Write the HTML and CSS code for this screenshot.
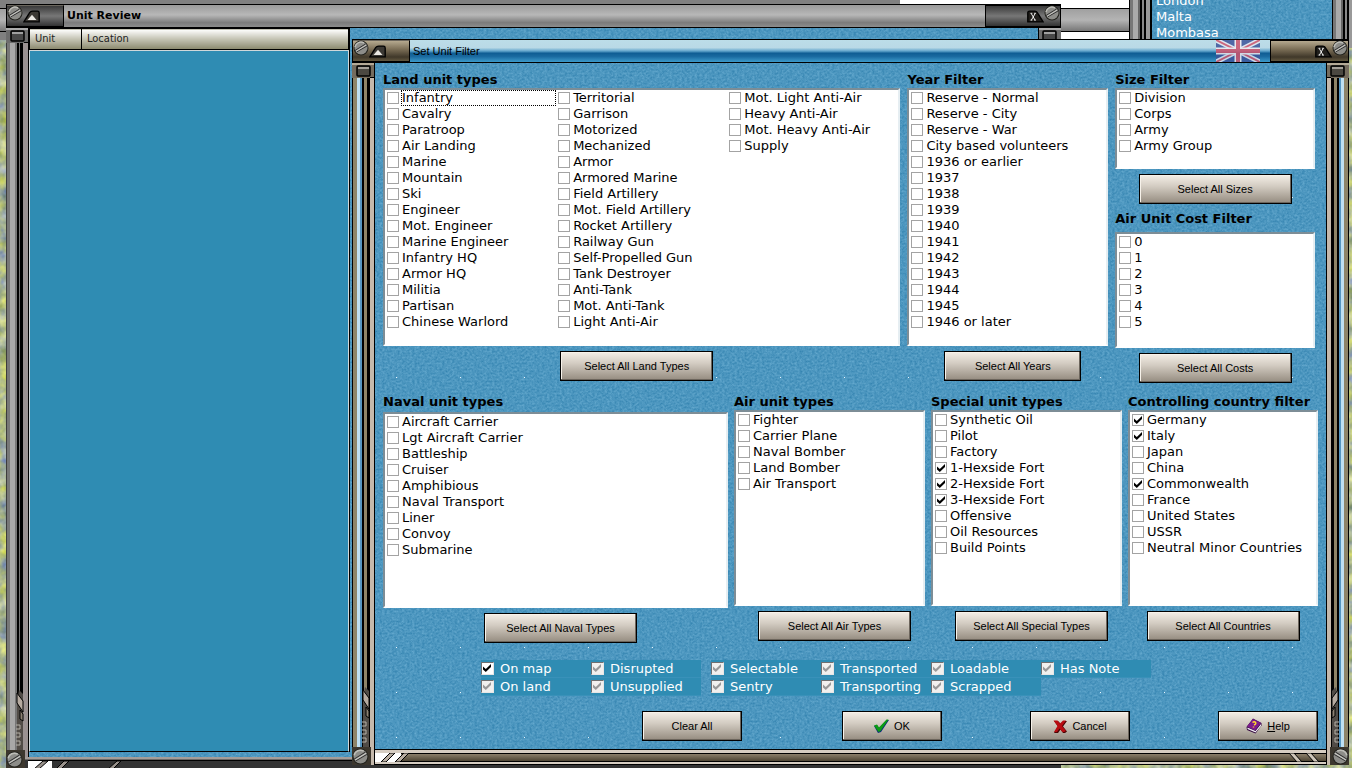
FILE: index.html
```html
<!DOCTYPE html>
<html lang="en">
<head>
  <meta charset="utf-8">
  <title>Set Unit Filter</title>
  <link rel="stylesheet" href="styles.css">
</head>
<body>

<svg class="defs" aria-hidden="true">
  <filter id="grain" x="0" y="0" width="100%" height="100%" color-interpolation-filters="sRGB">
    <feTurbulence type="fractalNoise" baseFrequency="0.4 0.5" numOctaves="2" seed="4"/>
    <feColorMatrix values="0.26 0 0 0 0.17  0.2 0 0 0 0.49  0.16 0 0 0 0.67  0 0 0 0 1"/>
  </filter>
  <filter id="terrain" x="0" y="0" width="100%" height="100%" color-interpolation-filters="sRGB">
    <feTurbulence type="fractalNoise" baseFrequency="0.08" numOctaves="3" seed="9"/>
    <feColorMatrix values="0.7 0 0 0 0.32  0.6 0 0 0 0.42  0 0 0.6 0 0.25  0 0 0 0 1"/>
  </filter>
  <pattern id="specks" width="64" height="45" patternUnits="userSpaceOnUse">
    <rect x="21" y="44" width="1" height="1" fill="#e8f6ff"/>
  </pattern>
  <symbol id="screw" viewBox="0 0 16 16">
    <circle cx="8" cy="8" r="7.5" fill="#24241f"/>
    <circle cx="8" cy="8" r="6.5" fill="#8d8d89"/>
    <path d="M2 7a6 6 0 0 1 9-4" fill="none" stroke="#bebeb8" stroke-width="1.5"/>
    <path d="M2 10.500L12.500 4M3.500 12L14 6" stroke="#333" stroke-width="1"/>
    <path d="M3 11.300L13.200 5" stroke="#c9c9c4" stroke-width="1"/>
  </symbol>
  <symbol id="roll" viewBox="0 0 20 14">
    <path d="M1 13L6.500 4Q8 1 11 1h5q2 0 2 2v10z" fill="#3b3833" stroke="#000" stroke-width="1.500"/>
    <path d="M5 11l5-6 5 6z" fill="#e9e7e2"/>
  </symbol>
  <symbol id="close" viewBox="0 0 20 14">
    <path d="M2 2.500Q2 1 4 1h6q2 0 3.500 3L19 13H2z" fill="#211f1c" stroke="#000" stroke-width="1.500"/>
    <path d="M5 3.500h2M9 3.500h2M5 11h2M9 11h2M6 4l4 7M10 4l-4 7" stroke="#fff" fill="none"/>
  </symbol>
  <symbol id="railcap" viewBox="0 0 23 15">
    <path d="M0 0h23v15H0z" fill="#756c5e"/>
    <path d="M0 1h23" stroke="#b5aa96" stroke-width="2"/>
    <rect x="5" y="3" width="13" height="10" rx="1" fill="#4b4841" stroke="#000" stroke-width="1.500"/>
    <path d="M6 5h11" stroke="#a5a098" stroke-width="2"/>
    <path d="M22.500 0v15M18 14.500h5" stroke="#000"/>
  </symbol>
  <symbol id="railfoot" viewBox="0 0 23 92">
    <path d="M13 14l4 4v60h-6V26z" fill="#514c47"/>
    <path d="M11 17l6 8v11l-6-9z" fill="#b5aaa0" stroke="#000"/>
    <path d="M14 34l3 4v7l-3-2z" fill="#8c8173" stroke="#000"/>
    <path d="M10 49h4v4h-4M10 57h4v4h-4M10 65h4v4h-4" fill="none" stroke="#b5b0a8"/>
    <path d="M0 74h19v18H0z" fill="#3c372e"/>
    <use href="#screw" x="0" y="75" width="17" height="17"/>
  </symbol>
</svg>

<main class="desktop">
  <svg class="terrain" aria-hidden="true"><rect width="100%" height="100%" filter="url(#terrain)"/></svg>
  <div class="backdrop">
    <div class="backdrop-bar"></div>
  </div>

  <section class="cities">
    <svg class="texture" aria-hidden="true"><rect width="100%" height="100%" filter="url(#grain)"/></svg>
    <div class="cities-rail"></div>
    <ul>
      <li>London</li>
      <li>Malta</li>
      <li>Mombasa</li>
    </ul>
    <div class="cities-rail end"></div>
  </section>

  <section class="window review">
    <header class="titlebar">
      <div class="cap cap-left">
        <svg class="screw" aria-hidden="true"><use href="#screw"/></svg>
        <button class="cap-button" aria-label="Roll up Unit Review"><svg aria-hidden="true"><use href="#roll"/></svg></button>
      </div>
      <h1>Unit Review</h1>
      <div class="cap cap-right">
        <button class="cap-button" aria-label="Close Unit Review"><svg aria-hidden="true"><use href="#close"/></svg></button>
        <svg class="screw" aria-hidden="true"><use href="#screw"/></svg>
      </div>
    </header>
    <div class="window-main">
      <div class="rail">
        <svg class="railcap" aria-hidden="true"><use href="#railcap"/></svg>
        <svg class="railfoot" aria-hidden="true"><use href="#railfoot"/></svg>
      </div>
      <div class="review-body">
        <svg class="texture" aria-hidden="true"><rect width="100%" height="100%" filter="url(#grain)"/></svg>
        <div class="unit-list">
          <table>
            <thead>
              <tr><th scope="col" class="col-unit">Unit</th><th scope="col">Location</th></tr>
            </thead>
          </table>
          <div class="unit-rows"></div>
        </div>
      </div>
      <div class="rail rail-right">
        <svg class="railcap" aria-hidden="true"><use href="#railcap"/></svg>
      </div>
    </div>
    <svg class="sill" aria-hidden="true">
      <path d="M0 1h1055" stroke="#a39d99" stroke-width="3"/>
      <path d="M22 3.500h1033" stroke="#000"/>
      <path d="M22 4h24v8H22z" fill="#fff"/>
      <path d="M28 12l9-8h5l-9 8zM50 12l8-8h5l-8 8zM102 12l9-8h4l-8 8z" fill="#99928c" stroke="#000"/>
    </svg>
  </section>

  <section class="window filter">
    <header class="titlebar">
      <div class="cap cap-left">
        <svg class="screw" aria-hidden="true"><use href="#screw"/></svg>
        <button class="cap-button" aria-label="Roll up Set Unit Filter"><svg aria-hidden="true"><use href="#roll"/></svg></button>
      </div>
      <h1>Set Unit Filter</h1>
      <svg class="flag" viewBox="0 0 44 22" preserveAspectRatio="none" role="img" aria-label="United Kingdom">
        <path d="M0 0h44v22H0z" fill="#3d559b"/>
        <path d="M0 0l44 22M44 0L0 22" stroke="#e4e8f2" stroke-width="5"/>
        <path d="M0 0l44 22M44 0L0 22" stroke="#d0546c" stroke-width="2"/>
        <path d="M22 0v22M0 11h44" stroke="#f2eef2" stroke-width="7"/>
        <path d="M22 0v22M0 11h44" stroke="#d0546c" stroke-width="4"/>
      </svg>
      <div class="cap cap-right">
        <button class="cap-button" aria-label="Close Set Unit Filter"><svg aria-hidden="true"><use href="#close"/></svg></button>
        <svg class="screw" aria-hidden="true"><use href="#screw"/></svg>
      </div>
    </header>

    <div class="window-main">
      <div class="rail">
        <svg class="railcap" aria-hidden="true"><use href="#railcap"/></svg>
        <svg class="railfoot" aria-hidden="true"><use href="#railfoot"/></svg>
      </div>

      <form class="filter-body">
        <svg class="texture" aria-hidden="true">
          <rect width="100%" height="100%" filter="url(#grain)"/>
          <rect width="100%" height="100%" fill="url(#specks)"/>
        </svg>

        <div class="groups groups-top">
          <section class="group">
            <h2>Land unit types</h2>
            <div class="list list-land">
              <label class="focused"><input type="checkbox"><span>Infantry</span></label>
              <label><input type="checkbox"><span>Cavalry</span></label>
              <label><input type="checkbox"><span>Paratroop</span></label>
              <label><input type="checkbox"><span>Air Landing</span></label>
              <label><input type="checkbox"><span>Marine</span></label>
              <label><input type="checkbox"><span>Mountain</span></label>
              <label><input type="checkbox"><span>Ski</span></label>
              <label><input type="checkbox"><span>Engineer</span></label>
              <label><input type="checkbox"><span>Mot. Engineer</span></label>
              <label><input type="checkbox"><span>Marine Engineer</span></label>
              <label><input type="checkbox"><span>Infantry HQ</span></label>
              <label><input type="checkbox"><span>Armor HQ</span></label>
              <label><input type="checkbox"><span>Militia</span></label>
              <label><input type="checkbox"><span>Partisan</span></label>
              <label><input type="checkbox"><span>Chinese Warlord</span></label>
              <label><input type="checkbox"><span>Territorial</span></label>
              <label><input type="checkbox"><span>Garrison</span></label>
              <label><input type="checkbox"><span>Motorized</span></label>
              <label><input type="checkbox"><span>Mechanized</span></label>
              <label><input type="checkbox"><span>Armor</span></label>
              <label><input type="checkbox"><span>Armored Marine</span></label>
              <label><input type="checkbox"><span>Field Artillery</span></label>
              <label><input type="checkbox"><span>Mot. Field Artillery</span></label>
              <label><input type="checkbox"><span>Rocket Artillery</span></label>
              <label><input type="checkbox"><span>Railway Gun</span></label>
              <label><input type="checkbox"><span>Self-Propelled Gun</span></label>
              <label><input type="checkbox"><span>Tank Destroyer</span></label>
              <label><input type="checkbox"><span>Anti-Tank</span></label>
              <label><input type="checkbox"><span>Mot. Anti-Tank</span></label>
              <label><input type="checkbox"><span>Light Anti-Air</span></label>
              <label><input type="checkbox"><span>Mot. Light Anti-Air</span></label>
              <label><input type="checkbox"><span>Heavy Anti-Air</span></label>
              <label><input type="checkbox"><span>Mot. Heavy Anti-Air</span></label>
              <label><input type="checkbox"><span>Supply</span></label>
            </div>
            <div class="group-action lean-left"><button type="button" class="btn btn-wide">Select All Land Types</button></div>
          </section>

          <section class="group">
            <h2>Year Filter</h2>
            <div class="list list-tall">
              <label><input type="checkbox"><span>Reserve - Normal</span></label>
              <label><input type="checkbox"><span>Reserve - City</span></label>
              <label><input type="checkbox"><span>Reserve - War</span></label>
              <label><input type="checkbox"><span>City based volunteers</span></label>
              <label><input type="checkbox"><span>1936 or earlier</span></label>
              <label><input type="checkbox"><span>1937</span></label>
              <label><input type="checkbox"><span>1938</span></label>
              <label><input type="checkbox"><span>1939</span></label>
              <label><input type="checkbox"><span>1940</span></label>
              <label><input type="checkbox"><span>1941</span></label>
              <label><input type="checkbox"><span>1942</span></label>
              <label><input type="checkbox"><span>1943</span></label>
              <label><input type="checkbox"><span>1944</span></label>
              <label><input type="checkbox"><span>1945</span></label>
              <label><input type="checkbox"><span>1946 or later</span></label>
            </div>
            <div class="group-action lean-right"><button type="button" class="btn btn-mid">Select All Years</button></div>
          </section>

          <div class="group-stack">
            <section class="group">
              <h2>Size Filter</h2>
              <div class="list list-size">
                <label><input type="checkbox"><span>Division</span></label>
                <label><input type="checkbox"><span>Corps</span></label>
                <label><input type="checkbox"><span>Army</span></label>
                <label><input type="checkbox"><span>Army Group</span></label>
              </div>
              <div class="group-action"><button type="button" class="btn btn-wide">Select All Sizes</button></div>
            </section>
            <section class="group group-cost">
              <h2>Air Unit Cost Filter</h2>
              <div class="list list-cost">
                <label><input type="checkbox"><span>0</span></label>
                <label><input type="checkbox"><span>1</span></label>
                <label><input type="checkbox"><span>2</span></label>
                <label><input type="checkbox"><span>3</span></label>
                <label><input type="checkbox"><span>4</span></label>
                <label><input type="checkbox"><span>5</span></label>
              </div>
              <div class="group-action"><button type="button" class="btn btn-wide">Select All Costs</button></div>
            </section>
          </div>
        </div>

        <div class="groups groups-bottom">
          <section class="group group-naval">
            <h2>Naval unit types</h2>
            <div class="list list-short">
              <label><input type="checkbox"><span>Aircraft Carrier</span></label>
              <label><input type="checkbox"><span>Lgt Aircraft Carrier</span></label>
              <label><input type="checkbox"><span>Battleship</span></label>
              <label><input type="checkbox"><span>Cruiser</span></label>
              <label><input type="checkbox"><span>Amphibious</span></label>
              <label><input type="checkbox"><span>Naval Transport</span></label>
              <label><input type="checkbox"><span>Liner</span></label>
              <label><input type="checkbox"><span>Convoy</span></label>
              <label><input type="checkbox"><span>Submarine</span></label>
            </div>
            <div class="group-action lean-right"><button type="button" class="btn btn-wide">Select All Naval Types</button></div>
          </section>

          <section class="group">
            <h2>Air unit types</h2>
            <div class="list list-short">
              <label><input type="checkbox"><span>Fighter</span></label>
              <label><input type="checkbox"><span>Carrier Plane</span></label>
              <label><input type="checkbox"><span>Naval Bomber</span></label>
              <label><input type="checkbox"><span>Land Bomber</span></label>
              <label><input type="checkbox"><span>Air Transport</span></label>
            </div>
            <div class="group-action lean-right"><button type="button" class="btn btn-wide">Select All Air Types</button></div>
          </section>

          <section class="group">
            <h2>Special unit types</h2>
            <div class="list list-short">
              <label><input type="checkbox"><span>Synthetic Oil</span></label>
              <label><input type="checkbox"><span>Pilot</span></label>
              <label><input type="checkbox"><span>Factory</span></label>
              <label><input type="checkbox" checked><span>1-Hexside Fort</span></label>
              <label><input type="checkbox" checked><span>2-Hexside Fort</span></label>
              <label><input type="checkbox" checked><span>3-Hexside Fort</span></label>
              <label><input type="checkbox"><span>Offensive</span></label>
              <label><input type="checkbox"><span>Oil Resources</span></label>
              <label><input type="checkbox"><span>Build Points</span></label>
            </div>
            <div class="group-action lean-right"><button type="button" class="btn btn-wide">Select All Special Types</button></div>
          </section>

          <section class="group">
            <h2>Controlling country filter</h2>
            <div class="list list-short">
              <label><input type="checkbox" checked><span>Germany</span></label>
              <label><input type="checkbox" checked><span>Italy</span></label>
              <label><input type="checkbox"><span>Japan</span></label>
              <label><input type="checkbox"><span>China</span></label>
              <label><input type="checkbox" checked><span>Commonwealth</span></label>
              <label><input type="checkbox"><span>France</span></label>
              <label><input type="checkbox"><span>United States</span></label>
              <label><input type="checkbox"><span>USSR</span></label>
              <label><input type="checkbox"><span>Neutral Minor Countries</span></label>
            </div>
            <div class="group-action"><button type="button" class="btn btn-wide">Select All Countries</button></div>
          </section>
        </div>

        <div class="states">
          <div class="state-grid two">
            <label><input type="checkbox" checked><span>On map</span></label>
            <label><input type="checkbox" class="mixed" checked><span>Disrupted</span></label>
            <label><input type="checkbox" class="mixed" checked><span>On land</span></label>
            <label><input type="checkbox" class="mixed" checked><span>Unsupplied</span></label>
          </div>
          <div class="state-grid four">
            <label><input type="checkbox" class="mixed" checked><span>Selectable</span></label>
            <label><input type="checkbox" class="mixed" checked><span>Transported</span></label>
            <label><input type="checkbox" class="mixed" checked><span>Loadable</span></label>
            <label><input type="checkbox" class="mixed" checked><span>Has Note</span></label>
            <label><input type="checkbox" class="mixed" checked><span>Sentry</span></label>
            <label><input type="checkbox" class="mixed" checked><span>Transporting</span></label>
            <label><input type="checkbox" class="mixed" checked><span>Scrapped</span></label>
          </div>
        </div>

        <div class="actions">
          <button type="button" class="btn btn-clear">Clear All</button>
          <button type="button" class="btn">
            <svg width="15" height="14" viewBox="0 0 15 14" aria-hidden="true"><path d="M0 7l3-1 2 3 8-8 2 0-8 12-3 1z" fill="#0a2a7a"/><path d="M0 6.500l3-1 2 3L12.500 0.500h2L6.500 12l-2 1z" fill="#0b9c14"/></svg>
            OK
          </button>
          <button type="button" class="btn">
            <svg width="14" height="13" viewBox="0 0 14 13" aria-hidden="true"><path d="M1 1h4l3 3 3-3h3l-4 5.500 4 5-2 1.500h-2L7.500 9.500 5 13H1l4-6.500z" fill="#4a0505"/><path d="M0.500 0.500h4L7 3.500 10 0.500h3L9 6l4 5-2 1H9.500L6.500 8.500 4 12H1l3.500-6z" fill="#b80c12"/></svg>
            Cancel
          </button>
          <button type="button" class="btn">
            <svg width="16" height="16" viewBox="0 0 16 16" aria-hidden="true">
              <path d="M0.500 9L7 0.500 15.500 5v2.500L9.500 15.500 1 12z" fill="#33083f"/>
              <path d="M1.500 9.500l8 3.500 5.500-7v2l-5.500 6.500L1.500 11z" fill="#f1edf4"/>
              <path d="M1 8.500L7 1l8 4-6 7.500z" fill="#7b1a8c"/>
              <path d="M6.500 4.500q2-1.500 3 0t-1.500 2.500M7.500 8.500v1" fill="none" stroke="#ffd52e" stroke-width="1.500"/>
            </svg>
            <span><u>H</u>elp</span>
          </button>
        </div>
      </form>

      <div class="rail rail-right">
        <svg class="railcap" aria-hidden="true"><use href="#railcap"/></svg>
        <svg class="railfoot" aria-hidden="true"><use href="#railfoot"/></svg>
      </div>
    </div>
    <div class="base">
      <svg width="34" height="9" viewBox="0 0 34 9" aria-hidden="true">
        <path d="M0 0h26v9H0z" fill="#fff"/>
        <path d="M6 9l9-9h5l-9 9zM20 9l9-9h5l-9 9z" fill="#b9aea2" stroke="#000"/>
      </svg>
      <svg width="42" height="9" viewBox="0 0 42 9" aria-hidden="true">
        <path d="M3 0h5l8 9h-5zM20 0h5l8 9h-5z" fill="#cfc6b9" stroke="#000"/>
      </svg>
    </div>
  </section>
</main>

</body>
</html>
```
FILE: styles.css
```css
* { box-sizing: border-box; }
body { margin: 0; font-family: "DejaVu Sans", sans-serif; font-size: 13px; line-height: 16px; color: #000; background: #8f9a76; }
h1, h2, ul { margin: 0; padding: 0; }
button { font-family: inherit; cursor: pointer; }
input { margin: 0; }
.defs { position: absolute; width: 0; height: 0; }

/* desktop behind the windows */
.desktop { position: relative; min-height: 100vh; overflow: hidden; }
.terrain { position: absolute; inset: 0; width: 100%; height: 100%; }
.texture { position: absolute; inset: 0; width: 100%; height: 100%; z-index: -1; }
.backdrop { position: absolute; top: 0; left: 0; right: 219px; height: 40px; padding-top: 8px; background: linear-gradient(90deg, #808080 900px, #fff 900px); }
.backdrop-bar { height: 24px; border-top: 1px solid #000; border-bottom: 1px solid #000; background: linear-gradient(#a0a0a0, #b4b4b4 50%, #777); }

.cities { position: absolute; z-index: 0; top: 0; right: 0; width: 223px; height: 48px; display: flex; overflow: hidden; color: #fff; background: #4494bd; }
.cities ul { flex: 1; list-style: none; margin-top: -7px; padding-left: 4px; }
.cities-rail { width: 23px; background: linear-gradient(90deg, #000 1px, #777 1px 4px, #aaa 4px 9px, #666 9px 11px, #000 11px 13px, #888 13px 15px, #000 15px 17px, #999 17px 21px, #000 21px); }
.cities-rail.end { width: 20px; }

/* window frame */
.window { position: absolute; z-index: 0; display: flex; flex-direction: column; }
.titlebar { display: flex; height: 24px; border: 1px solid #000; }
.titlebar h1 { flex: 1; padding-left: 3px; line-height: 22px; white-space: nowrap; }
.cap { display: flex; align-items: center; border: 1px solid #000; }
.cap-left { width: 57px; border-left: 0; border-top-color: #6b675e; }
.cap-right { justify-content: flex-end; border-right: 0; }
.cap .screw { width: 16px; height: 16px; margin-bottom: 6px; flex: none; }
.cap-button { display: flex; border: 0; padding: 0; background: none; margin-top: 1px; }
.cap-button svg { width: 18px; height: 13px; }
.window-main { flex: 1; display: flex; }
.rail { position: relative; display: flex; flex-direction: column; justify-content: space-between; flex: none; width: 23px; }
.railcap { width: 23px; height: 15px; }
.railfoot { width: 23px; height: 92px; }
.rail-right svg { transform: scaleX(-1); }

.review { top: 4px; left: 6px; bottom: 0; width: 1055px; }
.review .titlebar { background: linear-gradient(#9a9a9a, #b8b8b8 45%, #7c7c7c 80%, #8c8c8c); }
.review h1 { font-size: 11px; font-weight: bold; }
.review .cap { background: linear-gradient(#3a3a3a, #777 50%, #333); }
.review .cap-right { width: 75px; }
.review .rail { background: linear-gradient(90deg, #3c3c3c 1px, #777 1px 4px, #a8a8a8 4px 9px, #777 9px 11px, #000 11px 13px, #777 13px 14px, #000 14px 17px, #9b9292 17px 22px, #000 22px); }
.review .railcap { filter: grayscale(1); }
.review .railfoot { margin-bottom: -11px; }
.review-body { position: relative; z-index: 0; flex: 1; display: flex; padding-bottom: 5px; }
.unit-list { width: 321px; display: flex; flex-direction: column; border-right: 1px solid #000; }
.unit-list table { width: 100%; border-collapse: collapse; font: 11px/18px "DejaVu Sans Condensed", "DejaVu Sans", sans-serif; }
.unit-list th { height: 21px; padding: 0 0 0 5px; text-align: left; font-weight: normal; color: #222; border: 1px solid #000; background: linear-gradient(#fff, #c8c7b8 45%, #8a886c); }
.unit-list .col-unit { width: 52px; }
.unit-rows { flex: 1; background: #2f8cb3; border: 1px solid #d0d8da; border-bottom: 1px solid #000; }
.sill { width: 100%; height: 11px; flex: none; background: #333; }

.filter { top: 39px; left: 352px; right: 3px; }
.filter .titlebar { background: linear-gradient(#bcdde8, #b9d9e6 35%, #62a5cc 50%, #0f5d94 60%, #1a6aa0 75%, #3d9aca); }
.filter h1 { font-family: "Liberation Sans", sans-serif; font-size: 11px; font-weight: normal; }
.filter .cap { background: linear-gradient(#b5a98f, #7d7058 40%, #40382a 80%, #62573f); }
.filter .cap-right { width: 78px; margin-left: 10px; }
.flag { width: 44px; height: 22px; opacity: 0.85; }
.filter .rail { background: linear-gradient(90deg, #000 1px, #8e8468 1px 5px, #bfe0f2 5px 8px, #5596c2 8px 10px, #000 10px 12px, #8e8468 12px 15px, #000 15px 18px, #c5b9ac 18px 22px, #000 22px); }
.filter .rail-right { background: linear-gradient(270deg, #000 1px, #8e8468 1px 5px, #bfe0f2 5px 8px, #5596c2 8px 10px, #000 10px 12px, #8e8468 12px 15px, #000 15px 18px, #c5b9ac 18px 22px, #000 22px); }
.filter .rail { margin-bottom: -16px; }
.base { display: flex; justify-content: space-between; height: 16px; margin-left: 22px; margin-right: 20px; padding: 1px 0 0; border: 1px solid #000; background: linear-gradient(#d6cdc2 3px, #000 3px 4px, #8b7f6b 4px, #4e4534 11px, #000 11px 12px, #d6cdc2 12px); }
.base svg { margin-top: 2px; }

/* filter contents */
.filter-body { position: relative; z-index: 0; flex: 1; padding: 9px 8px 8px 8px; }
.groups { display: grid; }
.groups-top { grid-template-columns: 518fr 201fr 200fr; gap: 7px; margin-right: 3px; }
.groups-bottom { grid-template-columns: 345fr 191fr 191fr 190fr; gap: 6px; margin-top: 11px; }
.group h2 { font-size: 13px; font-weight: bold; white-space: nowrap; }
.group-cost { margin-top: 7px; }
.group-cost h2 { padding-bottom: 5px; }
.group-naval h2 { padding-bottom: 2px; }

.list { background: #fff; border: 2px solid; border-color: #7d8d96 #e6eef2 #fff #7d8d96; }
.list label { display: flex; align-items: center; height: 16px; padding-left: 2px; white-space: nowrap; }
.list span { padding-left: 3px; }
.list input { appearance: none; flex: none; width: 12px; height: 12px; border: 1px solid #a3a3a3; background: #fff; }
.list input:checked::before, .states input:checked::before { content: ""; display: block; width: 8px; height: 8px; margin: 1px; background: #000; clip-path: polygon(0 30%, 35% 62%, 100% 0, 100% 38%, 35% 100%, 0 68%); }
.list-land { display: grid; grid-template-columns: repeat(3, 1fr); grid-template-rows: repeat(15, 16px); grid-auto-flow: column; height: 258px; }
.list-land .focused span { flex: 1; height: 16px; margin-left: 2px; padding-left: 0; border: 1px dotted #000; line-height: 14px; }
.list-tall { height: 258px; }
.list-size { height: 81px; }
.list-cost { height: 116px; }
.list-short { height: 196px; }

.group-action { display: flex; justify-content: center; padding-top: 5px; }
.lean-left { padding-right: 10px; }
.lean-right { padding-left: 10px; }
.btn { display: flex; align-items: center; justify-content: center; gap: 5px; width: 100px; height: 30px; padding: 0; font: 11px/14px "Liberation Sans", sans-serif; color: #000; white-space: nowrap; border: 1px solid #000; background: linear-gradient(#f4eee6, #d3ccc2 40%, #958c80); box-shadow: inset -1px -1px #6c655c, inset 1px 1px #f7f2ea; }
.btn-wide { width: 153px; }
.btn-mid { width: 137px; }

.states { display: flex; gap: 10px; margin: 17px 0 0 98px; }
.state-grid { display: grid; color: #fff; }
.two { grid-template-columns: repeat(2, 110px); }
.four { grid-template-columns: repeat(4, 110px); }
.states label { display: flex; align-items: center; gap: 6px; height: 18px; background: #2f8cb3; border-bottom: 1px solid #3991b9; white-space: nowrap; }
.states input { appearance: none; flex: none; width: 13px; height: 13px; background: #fff; border: 1px solid; border-color: #6f6f6f #e6e6e6 #e6e6e6 #6f6f6f; }
.states .mixed { background: #f1f0ee; }
.states .mixed:checked::before { background: #999; }

.actions { display: flex; justify-content: flex-end; gap: 88px; margin-top: 15px; }
.btn-clear { margin-right: 12px; }
```
